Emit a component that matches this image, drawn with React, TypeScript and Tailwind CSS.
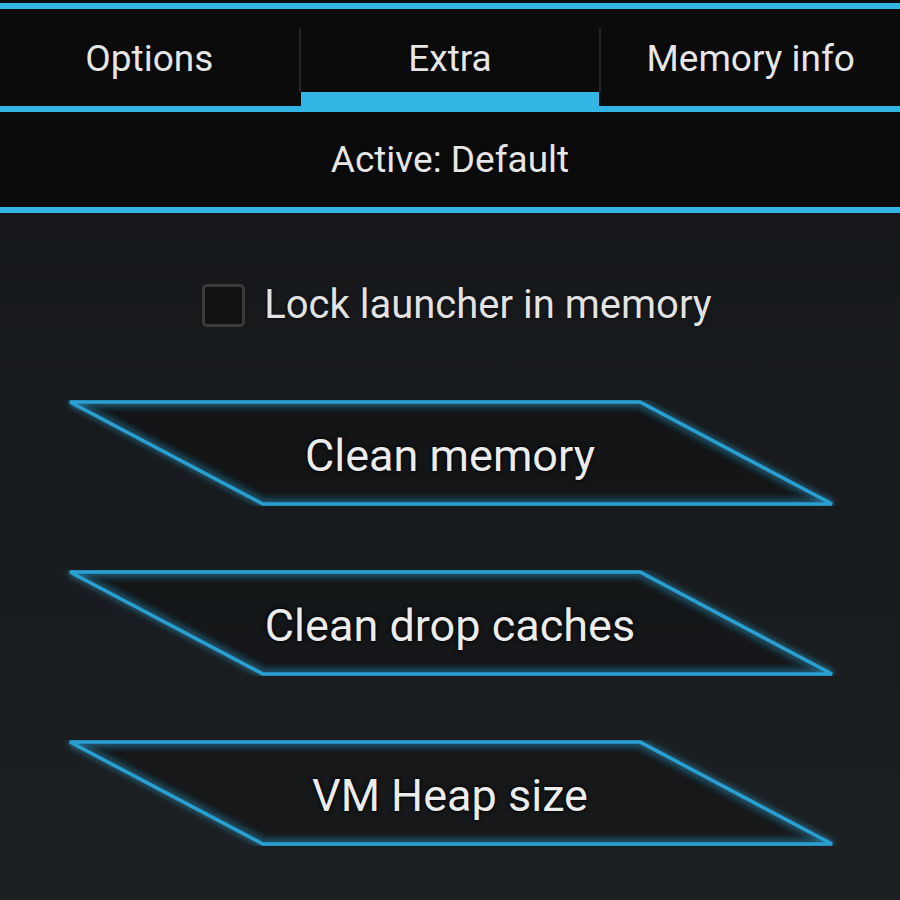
import React from 'react';

const tabs = ['Options', 'Extra', 'Memory info'];
const actions = ['Clean memory', 'Clean drop caches', 'VM Heap size'];

function Tab({ label, active }: { label: string; active: boolean }) {
	return (
		<div className="flex-1 flex flex-col">
			<div className="flex-1 flex items-center justify-center pt-[17px] text-[37px] text-[#e6e6e6] [text-shadow:0_0_3px_#000]">
				{label}
			</div>
			<div className={active ? 'h-[14px] bg-[#33b5e5]' : 'h-[14px]'} />
		</div>
	);
}

function SlantButton({ label }: { label: string }) {
	return (
		<div className="relative h-[106px] pt-[6px] flex items-center justify-center">
			<svg
				className="absolute inset-0 w-full h-full"
				viewBox="0 0 900 106"
				preserveAspectRatio="none"
			>
				<defs>
					<filter id={`glow-${label.length}`} x="-10%" y="-30%" width="120%" height="160%">
						<feGaussianBlur stdDeviation="3.5" result="b" />
						<feMerge>
							<feMergeNode in="b" />
							<feMergeNode in="SourceGraphic" />
						</feMerge>
					</filter>
				</defs>
				<polygon
					points="70,2 640,2 832,104 263,104"
					fill="rgba(0,0,0,0.12)"
					stroke="#2aa0d2"
					strokeWidth="3.5"
					strokeLinejoin="miter"
					filter={`url(#glow-${label.length})`}
				/>
			</svg>
			<span className="relative text-[45px] text-[#ececec] [text-shadow:0_0_4px_#000,0_0_2px_#000]">
				{label}
			</span>
		</div>
	);
}

export default function App() {
	return (
		<div className="w-[900px] h-[900px] flex flex-col overflow-hidden bg-gradient-to-b from-[#131517] to-[#1d2023] font-['Roboto',sans-serif]">
			<div className="h-[3px] bg-[#0b0b0b]" />
			<div className="h-[6px] bg-[#33b5e5]" />

			{/* tab strip */}
			<div className="h-[97px] flex bg-[#0b0b0b]">
				<Tab label={tabs[0]} active={false} />
				<div className="w-[2px] h-[64px] mt-[19px] bg-[#262626]" />
				<Tab label={tabs[1]} active />
				<div className="w-[2px] h-[64px] mt-[19px] bg-[#262626]" />
				<Tab label={tabs[2]} active={false} />
			</div>
			<div className="h-[6px] bg-[#33b5e5]" />

			<div className="h-[95px] flex items-center justify-center bg-[#0b0b0b] text-[37px] text-[#e6e6e6] [text-shadow:0_0_3px_#000]">
				Active: Default
			</div>
			<div className="h-[6px] bg-[#33b5e5]" />

			<div className="flex flex-col pt-[62px]">
				<div className="h-[60px] flex items-center justify-center gap-[19px] pl-[14px]">
					<div className="w-[43px] h-[43px] rounded-[5px] border-[3px] border-[#3a3a3a] bg-[#101214]" />
					<span className="text-[40px] text-[#e2e2e2] [text-shadow:0_0_3px_#000]">
						Lock launcher in memory
					</span>
				</div>

				<div className="flex flex-col gap-[64px] mt-[65px]">
					{actions.map((a) => (
						<SlantButton key={a} label={a} />
					))}
				</div>
			</div>
		</div>
	);
}
